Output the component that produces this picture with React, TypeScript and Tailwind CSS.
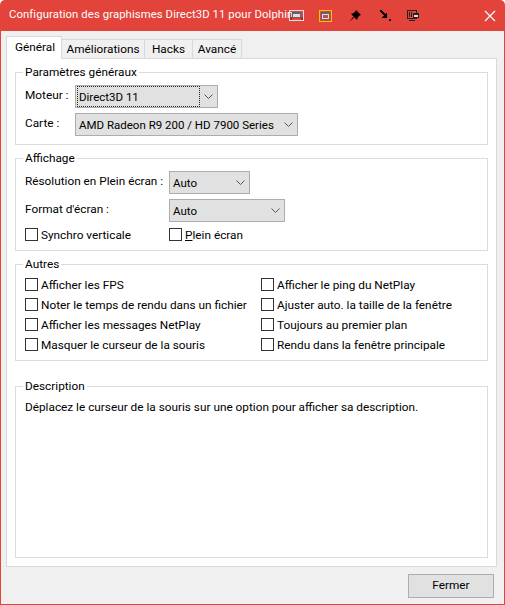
const font = "font-['Roboto','Noto_Sans',sans-serif]";

function Combo({ width, text, focused }: { width: string; text: string; focused?: boolean }) {
  return (
    <div className={`${width} h-[23px] shrink-0 flex items-center border border-[#adadad] bg-[#e1e1e1] pl-[3px] pr-[4px] text-[11.5px]`}>
      <span className={`flex-1 h-[19px] leading-[21px] whitespace-nowrap ${focused ? 'outline-1 outline-dotted outline-[#222] mr-[5px] -ml-px pl-[1px]' : ''}`}>{text}</span>
      <svg width="9" height="5" viewBox="0 0 9 5" className="shrink-0" fill="none" stroke="#555">
        <path d="M0.5 0.5 L4.5 4.5 L8.5 0.5" />
      </svg>
    </div>
  );
}

function Check({ label, accel, rest }: { label?: string; accel?: string; rest?: string }) {
  return (
    <label className="flex items-center h-[13px] gap-[3px] whitespace-nowrap">
      <input type="checkbox" className="appearance-none w-[13px] h-[13px] shrink-0 border border-[#333] bg-white" />
      <span className="pt-[2px]">
        {accel && <span className="underline">{accel}</span>}
        {accel ? rest : label}
      </span>
    </label>
  );
}

function Group({ title, className, children }: { title: string; className?: string; children: React.ReactNode }) {
  return (
    <fieldset className={`border border-[#dcdcdc] mx-[8px] min-w-0 pl-[9px] ${className ?? ''}`}>
      <legend className="-ml-[2px] px-[2px] h-[16px] leading-[16px]">{title}</legend>
      {children}
    </fieldset>
  );
}

function TitleIcons() {
  return (
    <div className="flex items-center h-full">
      <svg width="15" height="11" viewBox="0 0 15 11" shapeRendering="crispEdges" className="mr-[15px]">
        <rect x="0.5" y="0.5" width="14" height="10" fill="none" stroke="#dfe3ea" />
        <rect x="3" y="2" width="9" height="6" fill="#5b6472" />
        <rect x="4" y="4" width="7" height="3" fill="#e2dfe0" />
        <rect x="1" y="7" width="2" height="3" fill="#c21d14" />
        <rect x="12" y="7" width="2" height="3" fill="#c21d14" />
      </svg>
      <svg width="13" height="12" viewBox="0 0 13 12" shapeRendering="crispEdges" className="mr-[17px]">
        <rect width="13" height="12" fill="#f5c400" />
        <rect x="1" y="1" width="11" height="10" fill="#e2433b" />
        <rect x="2" y="2" width="9" height="8" fill="#5b6472" />
        <rect x="3" y="4" width="7" height="5" fill="#e2dfe0" />
        <rect x="4" y="5" width="5" height="3" fill="#d9433b" />
      </svg>
      <svg width="12" height="12" viewBox="0 0 12 12" className="mr-[19px]">
        <path d="M7 0 L12 5 L10.5 5.5 L8.5 8 L8.5 9.5 L7.5 9.5 L2.5 4.5 L2.5 3.5 L4 3.5 L6.5 1.5 Z M4.2 7 L0.5 11.5 L5 7.8 Z" fill="#000" />
      </svg>
      <svg width="11" height="11" viewBox="0 0 11 11" shapeRendering="crispEdges" className="mr-[16px]">
        <path d="M0 0 H2 V1 H3 V2 H4 V3 H5 V4 H6 V3 H7 V8 H2 V7 H3 V6 H4 V5 H3 V4 H2 V3 H1 V2 H0 Z" fill="#000" />
        <rect x="9" y="9" width="2" height="2" fill="#000" />
      </svg>
      <svg width="12" height="11" viewBox="0 0 12 11" shapeRendering="crispEdges">
        <rect x="0.5" y="0.5" width="9" height="8" fill="none" stroke="#222" />
        <rect x="2" y="2" width="1" height="5" fill="#222" />
        <rect x="4" y="2" width="1" height="5" fill="#222" />
        <rect x="6" y="3" width="6" height="5" fill="#222" />
        <rect x="7" y="5" width="4" height="2" fill="#e2dfe0" />
        <rect x="2" y="10" width="6" height="1" fill="#222" />
      </svg>
    </div>
  );
}

export default function App() {
  return (
    <div className={`${font} w-[505px] h-[605px] bg-white text-[11.8px] text-black`}>
      <div className="flex flex-col h-full rounded-t-[5px] bg-[#e2433b] px-px pb-px">
        <header className="flex items-center h-[31px] shrink-0 pl-[8px] text-white">
          <span className="w-[280px] shrink-0 whitespace-nowrap text-[11.3px] tracking-[0.1px]">Configuration des graphismes Direct3D 11 pour Dolphin</span>
          <TitleIcons />
          <svg width="12" height="12" viewBox="0 0 12 12" className="ml-auto mr-[8px]" stroke="#fff" strokeWidth="1.2">
            <path d="M1 1 L11 11 M11 1 L1 11" />
          </svg>
        </header>

        <main className="flex-1 flex flex-col bg-[#f0f0f0] px-[5px] pt-[5px]">
          <nav className="flex items-end h-[23px] shrink-0 relative z-10 -mb-px">
            <div className="w-[56px] h-[23px] border border-b-0 border-[#d9d9d9] bg-white pl-[8px] leading-[21px]">Général</div>
            <div className="w-[83px] h-[20px] border border-l-0 border-[#d9d9d9] text-center leading-[19px]">Améliorations</div>
            <div className="w-[48px] h-[20px] border border-l-0 border-[#d9d9d9] text-center leading-[19px]">Hacks</div>
            <div className="w-[49px] h-[20px] border border-l-0 border-[#d9d9d9] text-center leading-[19px]">Avancé</div>
          </nav>

          <section className="w-[491px] h-[509px] border border-[#d9d9d9] bg-white pt-[5px] flex flex-col">
            <Group title="Paramètres généraux" className="pb-[8px]">
              <div className="pt-[5px] flex flex-col gap-[5px]">
                <div className="flex items-center">
                  <span className="w-[50px] shrink-0 whitespace-nowrap pb-[2px]">Moteur :</span>
                  <Combo width="w-[143px]" text="Direct3D 11" focused />
                </div>
                <div className="flex items-center">
                  <span className="w-[50px] shrink-0 pb-[2px]">Carte :</span>
                  <Combo width="w-[223px]" text="AMD Radeon R9 200 / HD 7900 Series" />
                </div>
              </div>
            </Group>

            <Group title="Affichage" className="mt-[5px] pb-[9px]">
              <div className="pt-[5px] flex flex-col gap-[5px]">
                <div className="flex items-center">
                  <span className="w-[144px] shrink-0 whitespace-nowrap pb-[2px]">Résolution en Plein écran :</span>
                  <Combo width="w-[81px]" text="Auto" />
                </div>
                <div className="flex items-center">
                  <span className="w-[144px] shrink-0 pb-[2px]">Format d'écran :</span>
                  <Combo width="w-[116px]" text="Auto" />
                </div>
                <div className="grid grid-cols-[144px_1fr] mt-px">
                  <Check label="Synchro verticale" />
                  <Check accel="P" rest="lein écran" />
                </div>
              </div>
            </Group>

            <Group title="Autres" className="mt-[5px] pb-[9px]">
              <div className="pt-[6px] grid grid-cols-[236px_1fr] gap-y-[7px]">
                <Check label="Afficher les FPS" />
                <Check label="Afficher le ping du NetPlay" />
                <Check label="Noter le temps de rendu dans un fichier" />
                <Check label="Ajuster auto. la taille de la fenêtre" />
                <Check label="Afficher les messages NetPlay" />
                <Check label="Toujours au premier plan" />
                <Check label="Masquer le curseur de la souris" />
                <Check label="Rendu dans la fenêtre principale" />
              </div>
            </Group>

            <Group title="Description" className="mt-[17px] h-[180px]">
              <p className="pt-[5px]">Déplacez le curseur de la souris sur une option pour afficher sa description.</p>
            </Group>
          </section>

          <div className="flex justify-end pr-[5px] pt-[7px]">
            <button className="w-[86px] h-[24px] border border-[#adadad] bg-[#e1e1e1]">Fermer</button>
          </div>
        </main>
      </div>
    </div>
  );
}
